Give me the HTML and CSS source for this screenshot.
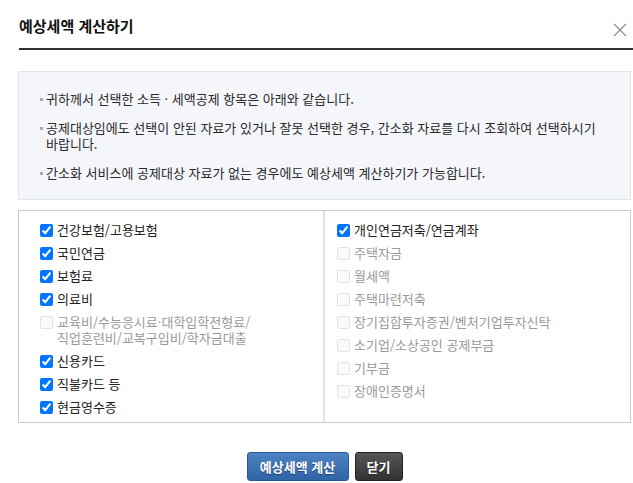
FILE: index.html
```html
<!DOCTYPE html>
<html lang="ko">
<head>
    <meta charset="UTF-8">
    <meta name="viewport" content="width=device-width, initial-scale=1.0">
    <title>예상세액 계산하기</title>
    <link rel="stylesheet" href="styles.css">
</head>
<body>
    <div class="popup">
        <div class="popup-head">
            <h2>예상세액 계산하기</h2>
            <button class="btn-close" aria-label="닫기">
                <svg width="14" height="14" viewBox="0 0 14 14"><path d="M1 1 L13 13 M13 1 L1 13" stroke="#8a8f99" stroke-width="1.2" fill="none"/></svg>
            </button>
        </div>
        <div class="popup-body">
            <ul class="notice">
                <li>귀하께서 선택한 소득 · 세액공제 항목은 아래와 같습니다.</li>
                <li>공제대상임에도 선택이 안된 자료가 있거나 잘못 선택한 경우, 간소화 자료를 다시 조회하여 선택하시기 바랍니다.</li>
                <li>간소화 서비스에 공제대상 자료가 없는 경우에도 예상세액 계산하기가 가능합니다.</li>
            </ul>
            <div class="check-box">
                <div class="check-col left">
                    <label class="item"><input type="checkbox" checked><span>건강보험/고용보험</span></label>
                    <label class="item"><input type="checkbox" checked><span>국민연금</span></label>
                    <label class="item"><input type="checkbox" checked><span>보험료</span></label>
                    <label class="item"><input type="checkbox" checked><span>의료비</span></label>
                    <label class="item off"><input type="checkbox" disabled><span class="wrap">교육비/수능응시료·대학입학전형료/직업훈련비/교복구입비/학자금대출</span></label>
                    <label class="item"><input type="checkbox" checked><span>신용카드</span></label>
                    <label class="item"><input type="checkbox" checked><span>직불카드 등</span></label>
                    <label class="item"><input type="checkbox" checked><span>현금영수증</span></label>
                </div>
                <div class="check-col right">
                    <label class="item"><input type="checkbox" checked><span>개인연금저축/연금계좌</span></label>
                    <label class="item off"><input type="checkbox" disabled><span>주택자금</span></label>
                    <label class="item off"><input type="checkbox" disabled><span>월세액</span></label>
                    <label class="item off"><input type="checkbox" disabled><span>주택마련저축</span></label>
                    <label class="item off"><input type="checkbox" disabled><span>장기집합투자증권/벤처기업투자신탁</span></label>
                    <label class="item off"><input type="checkbox" disabled><span>소기업/소상공인 공제부금</span></label>
                    <label class="item off"><input type="checkbox" disabled><span>기부금</span></label>
                    <label class="item off"><input type="checkbox" disabled><span>장애인증명서</span></label>
                </div>
            </div>
            <div class="btn-area">
                <button class="btn blue">예상세액 계산</button>
                <button class="btn dark">닫기</button>
            </div>
        </div>
    </div>
</body>
</html>
```

FILE: styles.css
```css
body {
    margin: 0;
    background-color: #fff;
    font-family: "Noto Sans CJK KR", "Noto Sans", sans-serif;
    color: #222;
}
.popup {
    width: 633px;
}
.popup-head {
    display: flex;
    align-items: center;
    justify-content: space-between;
    height: 48px;
    margin-left: 19px;
    border-bottom: 2px solid #333;
}
.popup-head h2 {
    margin: 0;
    font-size: 15px;
    font-weight: bold;
    color: #111;
    padding-top: 3px;
}
.btn-close {
    border: 0;
    background: none;
    padding: 0;
    margin-right: 6px;
    margin-top: 11px;
    width: 14px;
    height: 14px;
    display: flex;
}
.popup-body {
    padding: 21px 2px 0 18px;
}
.notice {
    list-style: none;
    margin: 0;
    padding: 19px 20px 18px 27px;
    background-color: #f4f6fa;
    border: 1px solid #e1e6ee;
    font-size: 13px;
    line-height: 16px;
    color: #2a2a2a;
}
.notice li {
    position: relative;
    margin-bottom: 13px;
}
.notice li:last-child {
    margin-bottom: 0;
}
.notice li::before {
    content: "";
    position: absolute;
    left: -6px;
    top: 7px;
    width: 3px;
    height: 3px;
    background-color: #a7acb3;
}
.check-box {
    display: grid;
    grid-template-columns: 306px 1fr;
    margin-top: 10px;
    height: 211px;
    border: 1px solid #ccc;
}
.check-col {
    display: flex;
    flex-direction: column;
    padding-top: 8px;
}
.check-col.left {
    padding-left: 21px;
    border-right: 2px solid #e2e2e2;
}
.check-col.right {
    padding-left: 12px;
}
.item {
    display: flex;
    align-items: flex-start;
    padding: 3px 0 4px;
    font-size: 13px;
    line-height: 16px;
    color: #222;
}
.item input {
    width: 13px;
    height: 13px;
    margin: 2px 4px 0 0;
    flex-shrink: 0;
}
.item .wrap {
    width: 198px;
}
.item.off {
    color: #9a9a9a;
}
.item.off input {
    opacity: 0.6;
}
.btn-area {
    display: flex;
    justify-content: center;
    gap: 6px;
    margin-top: 29px;
}
.btn {
    height: 29px;
    padding: 0 6px;
    border-radius: 3px;
    font-family: inherit;
    font-size: 13px;
    font-weight: bold;
    color: #fff;
    text-shadow: 0 1px 1px rgba(0, 0, 0, 0.4);
    cursor: pointer;
}
.btn.blue {
    width: 102px;
    background: linear-gradient(#4d82c2, #2f64a6);
    border: 1px solid #2a5a96;
}
.btn.dark {
    width: 48px;
    background: linear-gradient(#555, #333);
    border: 1px solid #222;
}
```
